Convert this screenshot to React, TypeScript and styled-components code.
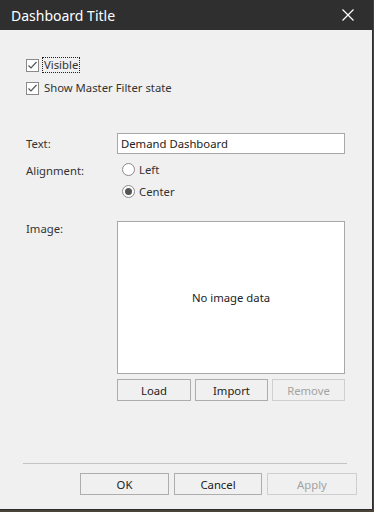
import styled, { createGlobalStyle } from 'styled-components';

const GlobalStyle = createGlobalStyle`
  html, body {
    margin: 0;
    padding: 0;
    background: #4a4438;
  }
  body {
    font-family: "Noto Sans", "Open Sans", sans-serif;
    font-size: 11.3px;
    color: #333;
  }
`;

const Dialog = styled.div`
  width: 372px;
  height: 509px;
  background: #f0f0f0;
  border-right: 1px solid #2d2d2d;
  border-bottom: 1px solid #2d2d2d;
  display: flex;
  flex-direction: column;
`;

const TitleBar = styled.div`
  height: 30px;
  background: #2f2f2f;
  display: flex;
  align-items: center;
  justify-content: space-between;
  padding: 0 18px 0 11px;
  color: #fff;
  font-size: 14px;
`;

const CloseButton = styled.div`
  width: 12px;
  height: 12px;
  display: flex;
`;

const Body = styled.div`
  padding: 27px 0 0 26px;
  display: flex;
  flex-direction: column;
`;

const CheckRow = styled.div<{ $gap?: number }>`
  display: flex;
  align-items: center;
  height: 16px;
  margin-top: ${p => p.$gap ?? 0}px;
`;

const Box = styled.span`
  width: 13px;
  height: 13px;
  box-sizing: border-box;
  border: 1px solid #8a8a8a;
  background: #fff;
  display: flex;
  align-items: center;
  justify-content: center;
  margin-right: 3px;
`;

const CheckLabel = styled.span<{ $focused?: boolean }>`
  line-height: 14px;
  padding: 0 1px;
  border: 1px dotted ${p => (p.$focused ? '#222' : 'transparent')};
`;

const FormRow = styled.div<{ $top: number; $align?: string }>`
  display: flex;
  align-items: ${p => p.$align ?? 'center'};
  margin-top: ${p => p.$top}px;
`;

const Label = styled.div<{ $pad?: number }>`
  width: 91px;
  flex-shrink: 0;
  padding-top: ${p => p.$pad ?? 0}px;
`;

const TextInput = styled.div`
  width: 228px;
  height: 21px;
  box-sizing: border-box;
  border: 1px solid #a8a8a8;
  background: #fff;
  padding-left: 3px;
  display: flex;
  align-items: center;
  color: #222;
`;

const RadioGroup = styled.div`
  display: flex;
  flex-direction: column;
  gap: 9px;
  padding-left: 5px;
`;

const RadioRow = styled.div`
  display: flex;
  align-items: center;
  height: 13px;
  gap: 4px;
`;

const Radio = styled.span<{ $on?: boolean }>`
  width: 13px;
  height: 13px;
  box-sizing: border-box;
  border-radius: 50%;
  border: 1px solid #8a8a8a;
  background: #fff;
  display: flex;
  align-items: center;
  justify-content: center;
  &::after {
    content: '';
    width: 7px;
    height: 7px;
    border-radius: 50%;
    background: ${p => (p.$on ? '#555' : 'transparent')};
  }
`;

const ImageColumn = styled.div`
  display: flex;
  flex-direction: column;
  gap: 5px;
`;

const ImageBox = styled.div`
  width: 228px;
  height: 153px;
  box-sizing: border-box;
  border: 1px solid #a8a8a8;
  background: #fff;
  display: flex;
  align-items: center;
  justify-content: center;
  color: #222;
`;

const ButtonRow = styled.div`
  display: flex;
  gap: 4px;
`;

const Button = styled.div<{ $w: number; $disabled?: boolean }>`
  width: ${p => p.$w}px;
  height: 22px;
  box-sizing: border-box;
  border: 1px solid ${p => (p.$disabled ? '#cfcfcf' : '#adadad')};
  background: #f0f0f0;
  color: ${p => (p.$disabled ? '#a3a3a3' : '#222')};
  display: flex;
  align-items: center;
  justify-content: center;
`;

const Footer = styled.div`
  margin-top: auto;
  padding: 0 15px 14px 23px;
  display: flex;
  flex-direction: column;
  align-items: stretch;
`;

const Separator = styled.div`
  height: 1px;
  background: #c4c4c4;
  margin-right: 10px;
`;

const FooterButtons = styled.div`
  display: flex;
  justify-content: flex-end;
  gap: 5px;
  margin-top: 9px;
`;

const Check = () => (
  <svg width="11" height="11" viewBox="0 0 11 11">
    <path d="M1.5 5.5 L4 8 L9.5 2" fill="none" stroke="#555" strokeWidth="1.2" />
  </svg>
);

export default function App() {
  return (
    <>
      <GlobalStyle />
      <Dialog>
        <TitleBar>
          <span>Dashboard Title</span>
          <CloseButton>
            <svg width="12" height="12" viewBox="0 0 12 12">
              <path d="M0.5 0.5 L11.5 11.5 M11.5 0.5 L0.5 11.5" stroke="#fff" strokeWidth="1.2" />
            </svg>
          </CloseButton>
        </TitleBar>
        <Body>
          <CheckRow>
            <Box><Check /></Box>
            <CheckLabel $focused>Visible</CheckLabel>
          </CheckRow>
          <CheckRow $gap={7}>
            <Box><Check /></Box>
            <CheckLabel>Show Master Filter state</CheckLabel>
          </CheckRow>
          <FormRow $top={37}>
            <Label>Text:</Label>
            <TextInput>Demand Dashboard</TextInput>
          </FormRow>
          <FormRow $top={9} $align="flex-start">
            <Label>Alignment:</Label>
            <RadioGroup>
              <RadioRow><Radio />Left</RadioRow>
              <RadioRow><Radio $on />Center</RadioRow>
            </RadioGroup>
          </FormRow>
          <FormRow $top={23} $align="flex-start">
            <Label $pad={0}>Image:</Label>
            <ImageColumn>
              <ImageBox>No image data</ImageBox>
              <ButtonRow>
                <Button $w={74}>Load</Button>
                <Button $w={73}>Import</Button>
                <Button $w={73} $disabled>Remove</Button>
              </ButtonRow>
            </ImageColumn>
          </FormRow>
        </Body>
        <Footer>
          <Separator />
          <FooterButtons>
            <Button $w={89}>OK</Button>
            <Button $w={88}>Cancel</Button>
            <Button $w={90} $disabled>Apply</Button>
          </FooterButtons>
        </Footer>
      </Dialog>
    </>
  );
}
